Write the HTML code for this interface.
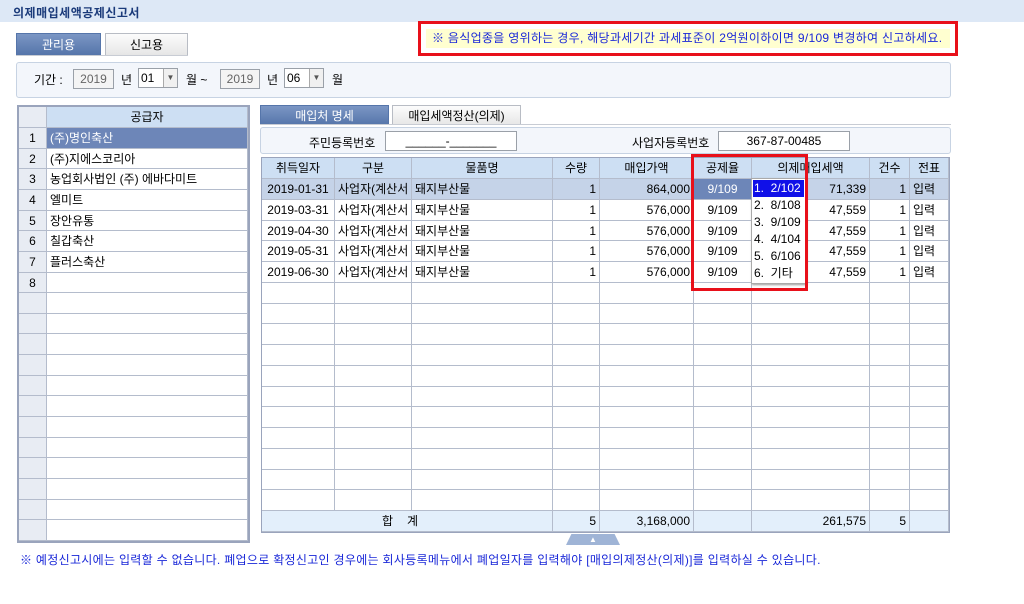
<!DOCTYPE html>
<html><head><meta charset="utf-8"><style>
*{box-sizing:border-box;margin:0;padding:0}
body{width:1024px;height:604px;background:#fff;font-family:"Liberation Sans","Noto Sans CJK KR","NanumGothic",sans-serif;font-size:12px;color:#000;position:relative;overflow:hidden}
.a{position:absolute}
.title{left:0;top:0;width:1024px;height:22px;background:#dde8f6;color:#1a3a7a;font-weight:bold;font-size:12px;padding:4px 13px;letter-spacing:0.5px}
.tab{height:22px;text-align:center;line-height:22px;font-size:12px;border:1px solid #b8bcc4;border-bottom:none}
.tb{background:linear-gradient(#7b96c4,#5575aa);color:#fff;border-color:#5575aa}
.tg{background:linear-gradient(#fcfcfc,#e6e6e6);color:#000}
.box{border:1px solid #c7d3e3;border-radius:3px;background:#f3f6fb}
.inp{border:1px solid #9aa0a8;background:#fff;height:20px;line-height:18px;text-align:center}
.grid{display:grid;border:1px solid #9aa4bc}
.grid>div{border-right:1px solid #b4bccc;border-bottom:1px solid #b4bccc;white-space:nowrap;overflow:hidden;padding:0 3px;line-height:20px}
.h{background:#cddff3;text-align:center}
.n{background:#e8ecf3;text-align:center}
.r{text-align:right}.c{text-align:center}
.sel{background:#6d86b8!important;color:#fff}
.hl{background:#c5d3e8}
.tot{background:#e3effb}
.dd div{white-space:nowrap;overflow:hidden;height:17px;padding-left:1px}
</style></head><body>
<div class="a title">의제매입세액공제신고서</div>
<div class="a tab tb" style="left:16px;top:33px;width:85px">관리용</div>
<div class="a tab tg" style="left:105px;top:33px;width:83px">신고용</div>
<div class="a" style="left:16px;top:55px;width:172px;height:1px;background:#c8ccd4"></div>
<div class="a" style="left:418px;top:21px;width:540px;height:35px;border:3px solid #e8101a;background:#fff;padding:5px"><div style="background:#ffffd0;color:#1a28d8;height:19px;line-height:19px;padding-left:6px;font-size:12px;letter-spacing:0.3px;white-space:nowrap">※ 음식업종을 영위하는 경우, 해당과세기간 과세표준이 2억원이하이면 9/109 변경하여 신고하세요.</div></div>
<div class="a box" style="left:16px;top:62px;width:935px;height:36px"></div>
<div class="a" style="left:34px;top:71px">기간 :</div>
<div class="a inp" style="left:73px;top:69px;width:41px;color:#666;background:#f4f4f4">2019</div>
<div class="a" style="left:121px;top:71px">년</div>
<div class="a inp" style="left:138px;top:68px;width:40px;text-align:left;padding-left:2px">01<span style="position:absolute;right:0;top:0;width:14px;height:18px;border-left:1px solid #aaa;background:#f0f0f0;font-size:8px;text-align:center;color:#555">▼</span></div>
<div class="a" style="left:186px;top:71px">월 ~</div>
<div class="a inp" style="left:220px;top:69px;width:40px;color:#666;background:#f4f4f4">2019</div>
<div class="a" style="left:267px;top:71px">년</div>
<div class="a inp" style="left:284px;top:68px;width:40px;text-align:left;padding-left:2px">06<span style="position:absolute;right:0;top:0;width:14px;height:18px;border-left:1px solid #aaa;background:#f0f0f0;font-size:8px;text-align:center;color:#555">▼</span></div>
<div class="a" style="left:332px;top:71px">월</div>

<div class="a grid" style="left:17px;top:105px;width:233px;height:438px;grid-template-columns:28px 1fr;grid-template-rows:21px repeat(20,1fr);border-width:2px">
<div class="n"></div><div class="h">공급자</div>
<div class="n">1</div><div class="sel">(주)명인축산</div>
<div class="n">2</div><div>(주)지에스코리아</div>
<div class="n">3</div><div>농업회사법인 (주) 에바다미트</div>
<div class="n">4</div><div>엘미트</div>
<div class="n">5</div><div>장안유통</div>
<div class="n">6</div><div>칠갑축산</div>
<div class="n">7</div><div>플러스축산</div>
<div class="n">8</div><div></div>
<div class="n"></div><div></div><div class="n"></div><div></div><div class="n"></div><div></div><div class="n"></div><div></div>
<div class="n"></div><div></div><div class="n"></div><div></div><div class="n"></div><div></div><div class="n"></div><div></div>
<div class="n"></div><div></div><div class="n"></div><div></div><div class="n"></div><div></div><div class="n"></div><div></div>
</div>

<div class="a tab tb" style="left:260px;top:105px;width:129px;height:20px;line-height:20px">매입처 명세</div>
<div class="a tab tg" style="left:392px;top:105px;width:129px;height:20px;line-height:20px">매입세액정산(의제)</div>
<div class="a" style="left:260px;top:124px;width:691px;height:1px;background:#c8ccd4"></div>
<div class="a box" style="left:260px;top:127px;width:691px;height:27px"></div>
<div class="a" style="left:309px;top:134px">주민등록번호</div>
<div class="a inp" style="left:385px;top:131px;width:132px">______-_______</div>
<div class="a" style="left:632px;top:134px">사업자등록번호</div>
<div class="a inp" style="left:718px;top:131px;width:132px">367-87-00485</div>

<div class="a grid" style="left:261px;top:157px;width:689px;height:376px;grid-template-columns:73px 77px 141px 47px 94px 58px 118px 40px 1fr;grid-template-rows:21px repeat(16,1fr) 21px">
<div class="h">취득일자</div><div class="h">구분</div><div class="h">물품명</div><div class="h">수량</div><div class="h">매입가액</div><div class="h">공제율</div><div class="h">의제매입세액</div><div class="h">건수</div><div class="h">전표</div>
<div class="hl c">2019-01-31</div><div class="hl">사업자(계산서</div><div class="hl">돼지부산물</div><div class="hl r">1</div><div class="hl r">864,000</div><div class="sel c">9/109</div><div class="hl r">71,339</div><div class="hl r">1</div><div class="hl">입력</div>
<div class="c">2019-03-31</div><div>사업자(계산서</div><div>돼지부산물</div><div class="r">1</div><div class="r">576,000</div><div class="c">9/109</div><div class="r">47,559</div><div class="r">1</div><div>입력</div>
<div class="c">2019-04-30</div><div>사업자(계산서</div><div>돼지부산물</div><div class="r">1</div><div class="r">576,000</div><div class="c">9/109</div><div class="r">47,559</div><div class="r">1</div><div>입력</div>
<div class="c">2019-05-31</div><div>사업자(계산서</div><div>돼지부산물</div><div class="r">1</div><div class="r">576,000</div><div class="c">9/109</div><div class="r">47,559</div><div class="r">1</div><div>입력</div>
<div class="c">2019-06-30</div><div>사업자(계산서</div><div>돼지부산물</div><div class="r">1</div><div class="r">576,000</div><div class="c">9/109</div><div class="r">47,559</div><div class="r">1</div><div>입력</div>
<div></div><div></div><div></div><div></div><div></div><div></div><div></div><div></div><div></div>
<div></div><div></div><div></div><div></div><div></div><div></div><div></div><div></div><div></div>
<div></div><div></div><div></div><div></div><div></div><div></div><div></div><div></div><div></div>
<div></div><div></div><div></div><div></div><div></div><div></div><div></div><div></div><div></div>
<div></div><div></div><div></div><div></div><div></div><div></div><div></div><div></div><div></div>
<div></div><div></div><div></div><div></div><div></div><div></div><div></div><div></div><div></div>
<div></div><div></div><div></div><div></div><div></div><div></div><div></div><div></div><div></div>
<div></div><div></div><div></div><div></div><div></div><div></div><div></div><div></div><div></div>
<div></div><div></div><div></div><div></div><div></div><div></div><div></div><div></div><div></div>
<div></div><div></div><div></div><div></div><div></div><div></div><div></div><div></div><div></div>
<div></div><div></div><div></div><div></div><div></div><div></div><div></div><div></div><div></div>
<div class="tot c" style="grid-column:span 3;letter-spacing:14px">합계</div><div class="tot r">5</div><div class="tot r">3,168,000</div><div class="tot"></div><div class="tot r">261,575</div><div class="tot r">5</div><div class="tot"></div>
</div>

<div class="a dd" style="left:751px;top:178px;width:55px;height:106px;background:#fff;border:1px solid #aaa;box-shadow:1px 1px 2px #999;font-size:12px;line-height:17px;padding:1px 1px">
<div style="background:#1010e8;color:#fff">1.&nbsp; 2/102</div><div>2.&nbsp; 8/108</div><div>3.&nbsp; 9/109</div><div>4.&nbsp; 4/104</div><div>5.&nbsp; 6/106</div><div>6.&nbsp; 기타</div></div>
<div class="a" style="left:691px;top:154px;width:117px;height:137px;border:3px solid #e8101a"></div>

<div class="a" style="left:566px;top:534px;width:54px;height:11px;background:#9fb4d6;clip-path:polygon(10% 0,90% 0,100% 100%,0 100%);color:#fff;font-size:8px;text-align:center;line-height:11px">▲</div>
<div class="a" style="left:20px;top:551px;color:#1a28d8;font-size:12px;letter-spacing:0.3px;white-space:nowrap">※ 예정신고시에는 입력할 수 없습니다. 폐업으로 확정신고인 경우에는 회사등록메뉴에서 폐업일자를 입력해야 [매입의제정산(의제)]를 입력하실 수 있습니다.</div>
</body></html>
